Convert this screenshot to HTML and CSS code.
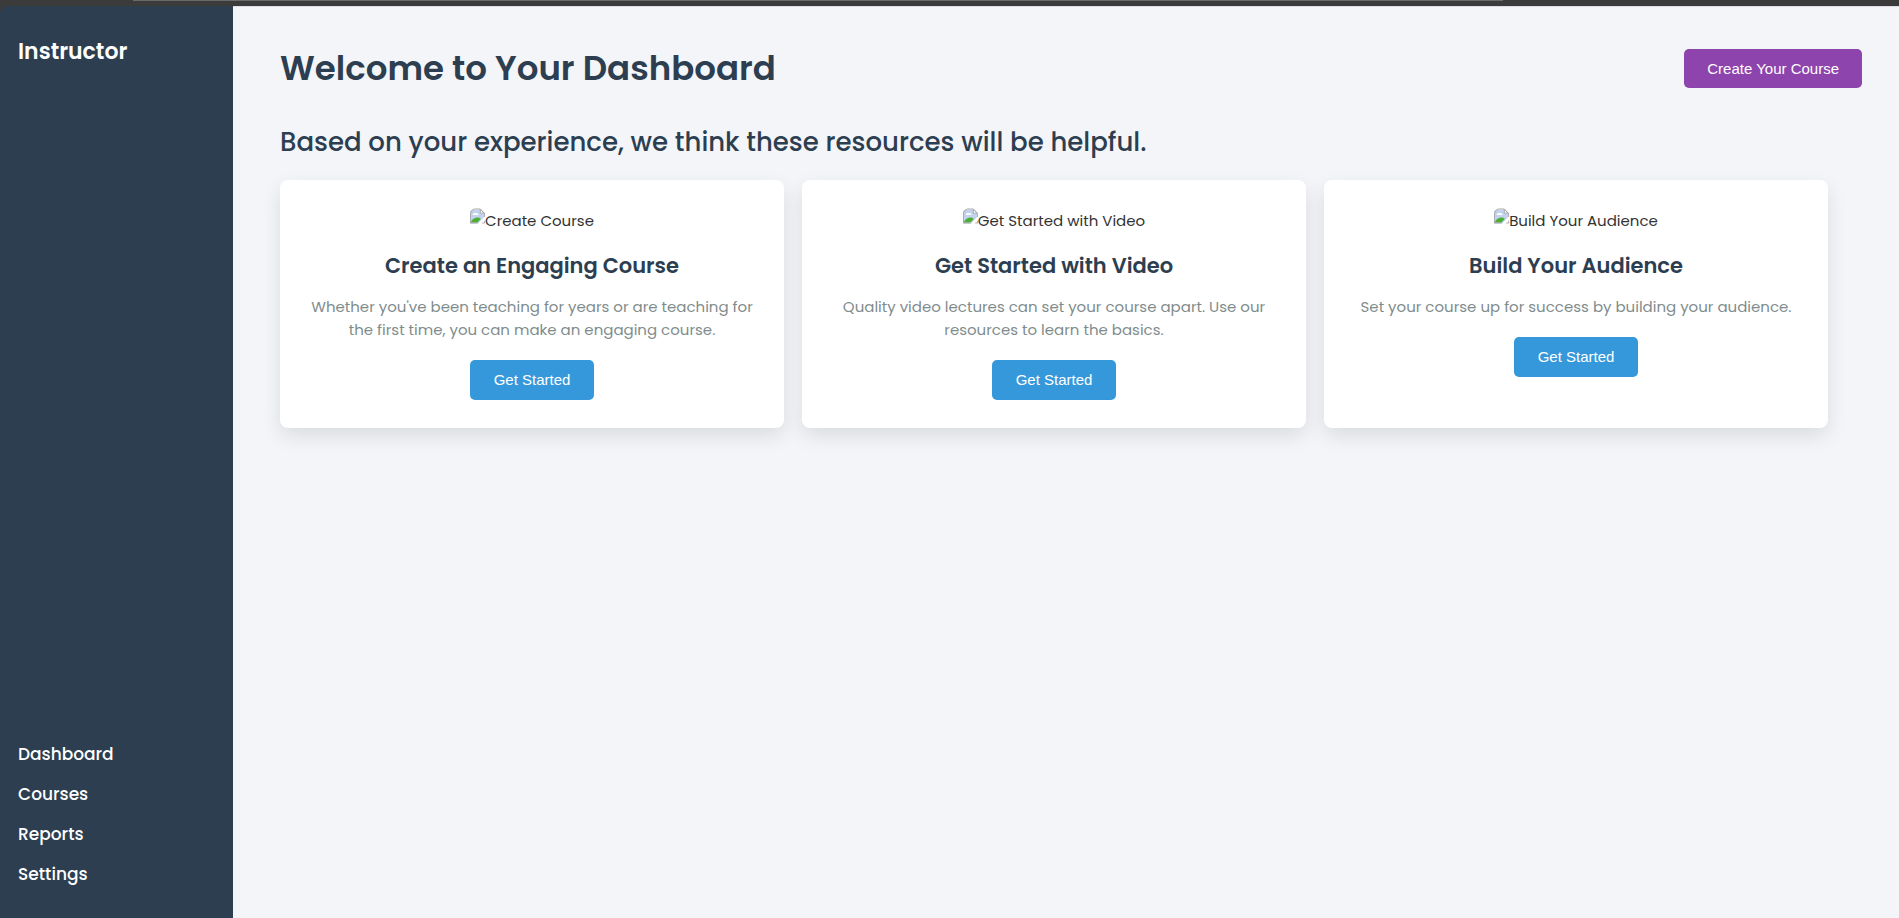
FILE: index.html
```
<!DOCTYPE html>
<html lang="en">
<head>
<meta charset="utf-8">
<title>Instructor Dashboard</title>
<link rel="stylesheet" href="styles.css">
</head>
<body>
<svg class="defs" aria-hidden="true">
  <symbol id="missing" viewBox="0 0 16 16">
    <path d="M4 1h7l4 4v4L9 16H0V5Q0 1 4 1Z" fill="#c3d2ee"/>
    <path d="M3 7a2 2 0 0 1 3-2 2 2 0 0 1 3 2Z" fill="#fff"/>
    <path d="M1 15v-1q3-4.500 7-4.500 2 0 3.500 1.500L8 15Z" fill="#4caf32"/>
    <path d="M.5 15.500V5Q1 1.500 4.500.5H11L15.500 5v4M.5 15.500H8M13 15.500h2.500V13" fill="none" stroke="#a8a8a8"/>
    <path d="M11 1v4h4Z" fill="#fff" stroke="#a8a8a8"/>
    <path d="M15.500 9.500 8.500 16h3l4-3.500Z" fill="#fff"/>
  </symbol>
</svg>
<div class="window-edge"></div>
<div class="layout">
  <aside class="sidebar">
    <h2 class="brand">Instructor</h2>
    <nav class="nav">
      <a href="#">Dashboard</a>
      <a href="#">Courses</a>
      <a href="#">Reports</a>
      <a href="#">Settings</a>
    </nav>
  </aside>
  <main class="main">
    <header class="header">
      <h1 class="title">Welcome to Your Dashboard</h1>
      <button class="button button-create" type="button">Create Your Course</button>
    </header>
    <section class="resources">
      <h2 class="subtitle">Based on your experience, we think these resources will be helpful.</h2>
      <div class="cards">
        <article class="card">
          <div class="picture"><svg class="missing"><use href="#missing"/></svg><span>Create Course</span></div>
          <h3 class="card-title">Create an Engaging Course</h3>
          <p class="card-text">Whether you've been teaching for years or are teaching for the first time, you can make an engaging course.</p>
          <button class="button" type="button">Get Started</button>
        </article>
        <article class="card">
          <div class="picture"><svg class="missing"><use href="#missing"/></svg><span>Get Started with Video</span></div>
          <h3 class="card-title">Get Started with Video</h3>
          <p class="card-text">Quality video lectures can set your course apart. Use our resources to learn the basics.</p>
          <button class="button" type="button">Get Started</button>
        </article>
        <article class="card">
          <div class="picture"><svg class="missing"><use href="#missing"/></svg><span>Build Your Audience</span></div>
          <h3 class="card-title">Build Your Audience</h3>
          <p class="card-text">Set your course up for success by building your audience.</p>
          <button class="button" type="button">Get Started</button>
        </article>
      </div>
    </section>
  </main>
</div>
</body>
</html>
```
FILE: styles.css
```
* { box-sizing: border-box; margin: 0; }
body {
  display: flex;
  flex-direction: column;
  min-height: 100vh;
  background: #3b3b3b;
  color: #333;
  font-family: Poppins, Inter, sans-serif;
  font-size: 15px;
  line-height: 23px;
}
.defs { position: absolute; width: 0; height: 0; }
.window-edge {
  height: 6px;
  background: linear-gradient(#6b6b6b, #6b6b6b) 133px 0 / calc(100% - 529px) 1px no-repeat;
}
.layout {
  display: flex;
  flex: 1;
}
.sidebar {
  display: flex;
  flex-direction: column;
  justify-content: space-between;
  width: 233px;
  padding: 29px 18px 24px;
  border-top-left-radius: 8px;
  background: #2c3e50;
  color: #fff;
}
.brand { font-size: 22px; line-height: 34px; font-weight: 600; }
.nav { display: flex; flex-direction: column; }
.nav a {
  color: #fff;
  font-size: 17px;
  line-height: 40px;
  font-weight: 500;
  text-decoration: none;
}
.main {
  flex: 1;
  padding: 34px 37px 34px 47px;
  border-top: 1px solid #dcdee4;
  background: #f3f5f9;
}
.header { display: flex; justify-content: space-between; align-items: center; }
.title { color: #2c3e50; font-size: 34px; line-height: 54px; font-weight: 600; }
.resources { padding: 27px 34px 0 0; }
.subtitle { color: #2c3e50; font-size: 26px; line-height: 40px; font-weight: 500; }
.cards {
  display: grid;
  grid-template-columns: repeat(3, 1fr);
  gap: 18px;
  margin-top: 18px;
}
.card {
  display: flex;
  flex-direction: column;
  align-items: center;
  padding: 28px;
  border-radius: 8px;
  background: #fff;
  box-shadow: 0 8px 20px rgba(0, 0, 0, .1);
  text-align: center;
}
.picture { display: flex; align-items: flex-start; }
.picture span { padding-top: 1px; }
.missing { width: 15px; height: 16px; }
.card-title {
  margin-top: 18px;
  color: #2c3e50;
  font-size: 21px;
  line-height: 32px;
  font-weight: 600;
}
.card-text { margin: 13px 0 19px; color: #7f8c8d; }
.button {
  padding: 11px 24px;
  border: 0;
  border-radius: 5px;
  background: #3498db;
  color: #fff;
  font: 15px/18px "Liberation Sans", Arial, sans-serif;
}
.button-create { padding: 11px 23px; background: #8e44ad; line-height: 17px; }
```
